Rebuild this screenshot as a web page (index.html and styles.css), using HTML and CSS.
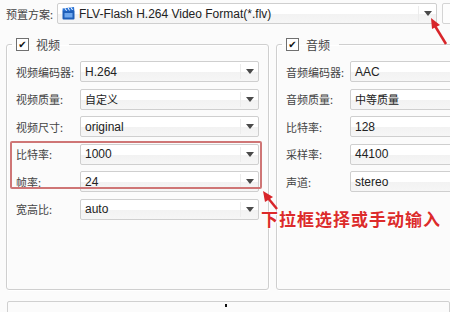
FILE: index.html
```html
<!DOCTYPE html>
<html lang="zh-CN">
  <head>
    <meta charset="UTF-8" />
    <title>视频转换设置</title>
    <link rel="stylesheet" href="styles.css">
  </head>
  <body>
    <div class="page">
      <div class="preset">
        <span class="preset-label">预置方案:</span>
        <div class="combo combo-preset">
          <svg class="fmt-icon" width="13" height="13" viewBox="0 0 13 13">
            <rect x="0.5" y="3" width="12" height="9.5" rx="1" fill="#1f5fb8" />
            <path d="M0.5 1.5 L12 0 L12.3 3 L0.8 4.2 Z" fill="#2b74d6" />
            <path d="M3 1.2 L4.5 3.8 M6 0.8 L7.5 3.4 M9 0.4 L10.5 3" stroke="#fff" stroke-width="1" />
            <rect x="2.5" y="6" width="8" height="4.5" fill="#6fa8ee" />
          </svg>
          <span class="value">FLV-Flash H.264 Video Format(*.flv)</span>
          <span class="drop"></span>
        </div>
        <div class="side-btn"></div>
      </div>

      <div class="groups">
        <fieldset class="group group-video">
          <legend><span class="check">✔</span>视频</legend>
          <div class="row">
            <span class="label">视频编码器:</span>
            <div class="combo"><span class="value">H.264</span><span class="drop"></span></div>
          </div>
          <div class="row">
            <span class="label">视频质量:</span>
            <div class="combo"><span class="value cjk">自定义</span><span class="drop"></span></div>
          </div>
          <div class="row">
            <span class="label">视频尺寸:</span>
            <div class="combo"><span class="value">original</span><span class="drop"></span></div>
          </div>
          <div class="marked">
            <div class="row">
              <span class="label">比特率:</span>
              <div class="combo"><span class="value">1000</span><span class="drop"></span></div>
            </div>
            <div class="row">
              <span class="label">帧率:</span>
              <div class="combo"><span class="value">24</span><span class="drop"></span></div>
            </div>
          </div>
          <div class="row">
            <span class="label">宽高比:</span>
            <div class="combo"><span class="value">auto</span><span class="drop"></span></div>
          </div>
        </fieldset>

        <fieldset class="group group-audio">
          <legend><span class="check">✔</span>音频</legend>
          <div class="row">
            <span class="label">音频编码器:</span>
            <div class="combo combo-open"><span class="value">AAC</span></div>
          </div>
          <div class="row">
            <span class="label">音频质量:</span>
            <div class="combo combo-open"><span class="value cjk">中等质量</span></div>
          </div>
          <div class="row">
            <span class="label">比特率:</span>
            <div class="combo combo-open"><span class="value">128</span></div>
          </div>
          <div class="row">
            <span class="label">采样率:</span>
            <div class="combo combo-open"><span class="value">44100</span></div>
          </div>
          <div class="row">
            <span class="label">声道:</span>
            <div class="combo combo-open"><span class="value">stereo</span></div>
          </div>
        </fieldset>
      </div>

      <div class="bottom-box"><span class="dot"></span></div>

      <div class="note">下拉框选择或手动输入</div>

      <svg class="arrows" width="450" height="312" viewBox="0 0 450 312">
        <line x1="277" y1="209" x2="268" y2="198" stroke="#d8252a" stroke-width="2.5" />
        <path d="M263 191 L273 197 L265 202 Z" fill="#d8252a" />
        <line x1="446" y1="44" x2="435" y2="26" stroke="#d8252a" stroke-width="2.5" />
        <path d="M431 18 L440 25 L432 29 Z" fill="#d8252a" />
      </svg>
    </div>
  </body>
</html>
```

FILE: styles.css
```css
body {
  margin: 0;
  padding: 0;
  background-color: #fbfbfb;
  color: #333;
  font-family: "Noto Sans CJK SC", "Liberation Sans", sans-serif;
  font-size: 11px;
}

.page {
  position: relative;
  width: 450px;
  height: 312px;
  overflow: hidden;
}

.preset {
  display: flex;
  align-items: center;
  height: 21px;
  padding: 3px 0 0 6px;
}

.preset-label {
  flex: 0 0 51px;
  white-space: nowrap;
  color: #444;
}

.combo {
  display: flex;
  align-items: center;
  height: 21px;
  box-sizing: border-box;
  border: 1px solid #cfcfcf;
  border-radius: 2px;
  background: linear-gradient(#ffffff 0%, #ffffff 50%, #f2f2f2 51%, #f6f6f6 100%);
}

.combo-preset {
  width: 380px;
  flex: 0 0 380px;
}

.fmt-icon {
  margin: 0 4px 0 4px;
}

.value {
  flex: 1;
  padding-left: 4px;
  font-family: "Liberation Sans", sans-serif;
  font-size: 12px;
  color: #222;
  white-space: nowrap;
}

.combo-preset .value {
  padding-left: 0;
}

.value.cjk {
  font-family: "Noto Sans CJK SC", sans-serif;
  font-size: 11px;
}

.drop {
  position: relative;
  width: 17px;
  height: 15px;
  border-left: 1px solid #ececec;
}

.drop::after {
  content: "";
  position: absolute;
  left: 5px;
  top: 5px;
  border-left: 4px solid transparent;
  border-right: 4px solid transparent;
  border-top: 5px solid #4a4a4a;
}

.side-btn {
  flex: 0 0 20px;
  height: 21px;
  margin-left: 5px;
  box-sizing: border-box;
  border: 1px solid #d4d4d4;
  border-radius: 2px;
  background: #fdfdfd;
}

.groups {
  display: flex;
  gap: 7px;
  margin-top: 13px;
  padding-left: 6px;
}

.group {
  margin: 0;
  height: 253px;
  box-sizing: border-box;
  padding: 9px 9px 0 9px;
  border: 1px solid #cfcfcf;
  border-radius: 3px;
  box-shadow: inset 1px 1px 0 #ffffff, 1px 1px 0 #ffffff;
}

.group-video {
  width: 263px;
  flex: 0 0 263px;
}

.group-audio {
  width: 220px;
  flex: 0 0 220px;
}

legend {
  display: flex;
  align-items: center;
  gap: 7px;
  height: 15px;
  margin-left: -4px;
  padding: 0 9px 0 4px;
  font-size: 12px;
  color: #444;
}

.check {
  display: inline-flex;
  align-items: center;
  justify-content: center;
  width: 13px;
  height: 13px;
  box-sizing: border-box;
  border: 1px solid #707070;
  background: #ffffff;
  color: #111;
  font-family: "DejaVu Sans", sans-serif;
  font-size: 10px;
  font-weight: bold;
  line-height: 1;
}

.row {
  display: flex;
  align-items: center;
  height: 21px;
  margin-bottom: 6.5px;
}

.label {
  width: 64px;
  flex: 0 0 64px;
  color: #444;
}

.group-video .combo {
  width: 179px;
}

.group-audio .combo {
  width: 200px;
}

.marked {
  position: relative;
}

.marked::after {
  content: "";
  position: absolute;
  left: -6px;
  right: -3px;
  top: -3px;
  bottom: 3px;
  border: 2px solid #cf7676;
  border-radius: 2px;
  pointer-events: none;
}

.bottom-box {
  position: relative;
  height: 30px;
  margin: 11px 0 0 7px;
  border: 1px solid #d0d0d0;
  border-radius: 2px;
}

.dot {
  position: absolute;
  left: 217px;
  top: 2px;
  width: 2px;
  height: 3px;
  background: #111;
}

.note {
  position: absolute;
  left: 261px;
  top: 206px;
  font-family: "Noto Sans CJK SC", sans-serif;
  font-size: 17px;
  font-weight: bold;
  letter-spacing: 1px;
  color: #dc2b2b;
  text-shadow: 0 0 2px #ffffff, 0 0 2px #ffffff, 1px 1px 1px #ffffff;
}

.arrows {
  position: absolute;
  left: 0;
  top: 0;
  pointer-events: none;
}
```
